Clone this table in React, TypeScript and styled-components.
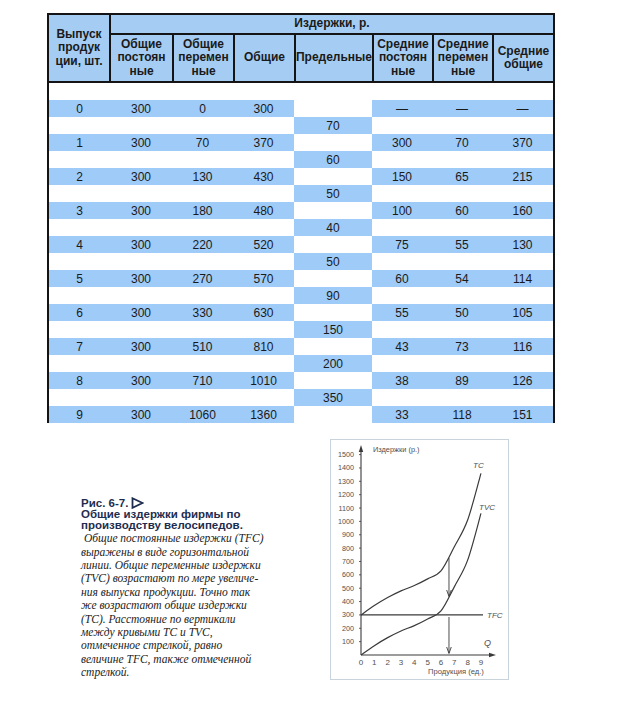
import React from "react";
import styled, { createGlobalStyle } from "styled-components";

const Global = createGlobalStyle`
  html, body { margin: 0; padding: 0; background: #ffffff; }
  body { font-family: "Liberation Sans", Arial, sans-serif; }
`;

const Page = styled.div`
  padding: 13px 0 0 47px;
  width: 508px;
`;

const HeadGrid = styled.div`
  display: grid;
  grid-template-columns: 60px 61px 59px 59px 76px 58px 58px 59px;
  grid-template-rows: 18px 46px;
  gap: 2px;
  padding: 2px;
  background: #141414;
  width: 504px;
`;

const HeadCell = styled.div<{ $col?: string; $row?: string }>`
  background: #a5cdf4;
  display: flex;
  align-items: center;
  justify-content: center;
  text-align: center;
  font-family: "Liberation Sans", Arial, sans-serif;
  font-weight: 700;
  font-size: 12px;
  line-height: 13.5px;
  color: #1a1a1a;
  white-space: nowrap;
  grid-column: ${(p) => p.$col || "auto"};
  grid-row: ${(p) => p.$row || "auto"};
`;

const BodyGrid = styled.div`
  display: grid;
  grid-template-columns: 61px 62px 61px 61px 78px 60px 60px 61px;
  grid-auto-rows: 17px;
  border-left: 2px solid #141414;
  border-right: 2px solid #141414;
  width: 504px;
`;

const Spacer = styled.div`
  grid-column: 1 / -1;
`;

const Cell = styled.div<{ $fill?: boolean }>`
  background: ${(p) => (p.$fill ? "#9fcbf8" : "#ffffff")};
  display: flex;
  align-items: center;
  justify-content: center;
  font-family: "Liberation Sans", Arial, sans-serif;
  font-size: 12px;
  color: #1a1a1a;
`;

const Lower = styled.div`
  display: grid;
  grid-template-columns: 283px 181px;
  margin-top: 16px;
`;

const Caption = styled.div`
  padding: 58px 0 0 34px;
`;

const CapTitle = styled.div`
  font-family: "Liberation Sans", Arial, sans-serif;
  font-weight: 700;
  font-size: 11.5px;
  line-height: 10.6px;
  color: #1e2d4f;
  white-space: nowrap;
`;

const TitleFirst = styled.div`
  display: flex;
  align-items: center;
  gap: 3px;
`;

const CapBody = styled.div`
  margin-top: 2px;
  font-family: "Liberation Serif", "Times New Roman", serif;
  font-style: italic;
  font-size: 11.5px;
  line-height: 13.4px;
  color: #1c1c1c;
  white-space: nowrap;
`;

const ChartFrame = styled.div`
  width: 179px;
  height: 241px;
  border: 1px solid #c9d3db;
  box-sizing: border-box;
`;

type Row = {
  q: number;
  tfc: number;
  tvc: number;
  tc: number;
  afc: string;
  avc: string;
  atc: string;
};

const rows: Row[] = [
  { q: 0, tfc: 300, tvc: 0, tc: 300, afc: "—", avc: "—", atc: "—" },
  { q: 1, tfc: 300, tvc: 70, tc: 370, afc: "300", avc: "70", atc: "370" },
  { q: 2, tfc: 300, tvc: 130, tc: 430, afc: "150", avc: "65", atc: "215" },
  { q: 3, tfc: 300, tvc: 180, tc: 480, afc: "100", avc: "60", atc: "160" },
  { q: 4, tfc: 300, tvc: 220, tc: 520, afc: "75", avc: "55", atc: "130" },
  { q: 5, tfc: 300, tvc: 270, tc: 570, afc: "60", avc: "54", atc: "114" },
  { q: 6, tfc: 300, tvc: 330, tc: 630, afc: "55", avc: "50", atc: "105" },
  { q: 7, tfc: 300, tvc: 510, tc: 810, afc: "43", avc: "73", atc: "116" },
  { q: 8, tfc: 300, tvc: 710, tc: 1010, afc: "38", avc: "89", atc: "126" },
  { q: 9, tfc: 300, tvc: 1060, tc: 1360, afc: "33", avc: "118", atc: "151" },
];

const marginal = [70, 60, 50, 40, 50, 90, 150, 200, 350];

const X0 = 30;
const Y0 = 215;
const SX = 13.33;
const SY = 0.1336;
const px = (q: number) => X0 + SX * q;
const py = (v: number) => Y0 - SY * v;

function smooth(vals: number[]): string {
  const pts = vals.map((v, i) => [px(i), py(v)]);
  let d = `M${pts[0][0].toFixed(2)},${pts[0][1].toFixed(2)}`;
  for (let i = 0; i < pts.length - 1; i++) {
    const p0 = pts[i - 1] || pts[i];
    const p1 = pts[i];
    const p2 = pts[i + 1];
    const p3 = pts[i + 2] || p2;
    const c1x = p1[0] + (p2[0] - p0[0]) / 6;
    const c1y = p1[1] + (p2[1] - p0[1]) / 6;
    const c2x = p2[0] - (p3[0] - p1[0]) / 6;
    const c2y = p2[1] - (p3[1] - p1[1]) / 6;
    d += ` C${c1x.toFixed(2)},${c1y.toFixed(2)} ${c2x.toFixed(2)},${c2y.toFixed(2)} ${p2[0].toFixed(2)},${p2[1].toFixed(2)}`;
  }
  return d;
}

const Chart: React.FC = () => {
  const tc = rows.map((r) => r.tc);
  const tvc = rows.map((r) => r.tvc);
  const ax = px(6.6);
  const ink = "#3a3a3a";
  const txt = "#505050";
  return (
    <svg width="177" height="239" viewBox="0 0 177 239">
      {/* y axis */}
      <line x1={X0} y1={Y0} x2={X0} y2={10} stroke={ink} strokeWidth="1.1" />
      <polygon points={`${X0},5 ${X0 - 2.2},12 ${X0 + 2.2},12`} fill={ink} />
      {/* x axis */}
      <line x1={X0} y1={Y0} x2={160} y2={Y0} stroke={ink} strokeWidth="1.1" />
      <polygon points={`${165},${Y0} ${158},${Y0 - 2.2} ${158},${Y0 + 2.2}`} fill={ink} />
      {Array.from({ length: 15 }, (_, i) => (i + 1) * 100).map((v) => (
        <g key={v}>
          <line x1={X0 - 2} y1={py(v)} x2={X0} y2={py(v)} stroke={ink} strokeWidth="0.8" />
          <text
            x={23}
            y={py(v) + 2.5}
            textAnchor="end"
            fontSize="7.2"
            fill={txt}
            fontFamily="Liberation Sans, Arial, sans-serif"
          >
            {v}
          </text>
        </g>
      ))}
      {Array.from({ length: 10 }, (_, i) => i).map((q) => (
        <text
          key={q}
          x={px(q)}
          y={225}
          textAnchor="middle"
          fontSize="8"
          fill={txt}
          fontFamily="Liberation Sans, Arial, sans-serif"
        >
          {q}
        </text>
      ))}
      <text x={42} y={12} fontSize="7.4" fill={txt} fontFamily="Liberation Sans, Arial, sans-serif">
        Издержки (р.)
      </text>
      <text x={125} y={234} textAnchor="middle" fontSize="7.6" fill={txt} fontFamily="Liberation Sans, Arial, sans-serif">
        Продукция (ед.)
      </text>
      <text x={153} y={206} fontSize="9" fontStyle="italic" fill={txt} fontFamily="Liberation Sans, Arial, sans-serif">
        Q
      </text>
      {/* TFC */}
      <line x1={X0} y1={py(300)} x2={152} y2={py(300)} stroke={ink} strokeWidth="1.1" />
      <text x={156} y={py(300) + 3} fontSize="8" fontStyle="italic" fill={txt} fontFamily="Liberation Sans, Arial, sans-serif">
        TFC
      </text>
      {/* curves */}
      <path d={smooth(tc)} fill="none" stroke={ink} strokeWidth="1.2" />
      <path d={smooth(tvc)} fill="none" stroke={ink} strokeWidth="1.2" />
      <text x={142} y={28} fontSize="8" fontStyle="italic" fill={txt} fontFamily="Liberation Sans, Arial, sans-serif">
        TC
      </text>
      <text x={148} y={70} fontSize="8" fontStyle="italic" fill={txt} fontFamily="Liberation Sans, Arial, sans-serif">
        TVC
      </text>
      {/* arrows */}
      <line x1={ax} y1={118} x2={ax} y2={156} stroke={ink} strokeWidth="0.9" />
      <polyline points={`${ax - 2.3},150 ${ax},156.5 ${ax + 2.3},150`} fill="none" stroke={ink} strokeWidth="0.9" />
      <line x1={ax} y1={177} x2={ax} y2={213} stroke={ink} strokeWidth="0.9" />
      <polyline points={`${ax - 2.3},207 ${ax},213.5 ${ax + 2.3},207`} fill="none" stroke={ink} strokeWidth="0.9" />
    </svg>
  );
};

const Triangle: React.FC = () => (
  <svg width="13" height="12" viewBox="0 0 13 12">
    <polygon points="1.5,1.2 11.5,6 1.5,10.8" fill="none" stroke="#1e2d4f" strokeWidth="1.8" strokeLinejoin="miter" />
  </svg>
);

export default function App() {
  const body: React.ReactNode[] = [];
  rows.forEach((r, i) => {
    body.push(
      <Cell key={`q${i}a`} $fill>{r.q}</Cell>,
      <Cell key={`q${i}b`} $fill>{r.tfc}</Cell>,
      <Cell key={`q${i}c`} $fill>{r.tvc}</Cell>,
      <Cell key={`q${i}d`} $fill>{r.tc}</Cell>,
      <Cell key={`q${i}e`} />,
      <Cell key={`q${i}f`} $fill>{r.afc}</Cell>,
      <Cell key={`q${i}g`} $fill>{r.avc}</Cell>,
      <Cell key={`q${i}h`} $fill>{r.atc}</Cell>
    );
    if (i < marginal.length) {
      body.push(
        <Cell key={`m${i}a`} />,
        <Cell key={`m${i}b`} />,
        <Cell key={`m${i}c`} />,
        <Cell key={`m${i}d`} />,
        <Cell key={`m${i}e`} $fill>{marginal[i]}</Cell>,
        <Cell key={`m${i}f`} />,
        <Cell key={`m${i}g`} />,
        <Cell key={`m${i}h`} />
      );
    }
  });

  return (
    <>
      <Global />
      <Page>
        <HeadGrid>
          <HeadCell $row="1 / 3" $col="1">
            Выпуск<br />продук<br />ции, шт.
          </HeadCell>
          <HeadCell $col="2 / 9" $row="1">
            Издержки, р.
          </HeadCell>
          <HeadCell>Общие<br />постоян<br />ные</HeadCell>
          <HeadCell>Общие<br />перемен<br />ные</HeadCell>
          <HeadCell>Общие</HeadCell>
          <HeadCell>Предельные</HeadCell>
          <HeadCell>Средние<br />постоян<br />ные</HeadCell>
          <HeadCell>Средние<br />перемен<br />ные</HeadCell>
          <HeadCell>Средние<br />общие</HeadCell>
        </HeadGrid>
        <BodyGrid>
          <Spacer />
          {body}
        </BodyGrid>
        <Lower>
          <Caption>
            <CapTitle>
              <TitleFirst>
                Рис. 6-7. <Triangle />
              </TitleFirst>
              Общие издержки фирмы по
              <br />
              производству велосипедов.
            </CapTitle>
            <CapBody>
              &nbsp;Общие постоянные издержки (TFC)
              <br />
              выражены в виде горизонтальной
              <br />
              линии. Общие переменные издержки
              <br />
              (TVC) возрастают по мере увеличе-
              <br />
              ния выпуска продукции. Точно так
              <br />
              же возрастают общие издержки
              <br />
              (TC). Расстояние по вертикали
              <br />
              между кривыми TC и TVC,
              <br />
              отмеченное стрелкой, равно
              <br />
              величине TFC, также отмеченной
              <br />
              стрелкой.
            </CapBody>
          </Caption>
          <ChartFrame>
            <Chart />
          </ChartFrame>
        </Lower>
      </Page>
    </>
  );
}
